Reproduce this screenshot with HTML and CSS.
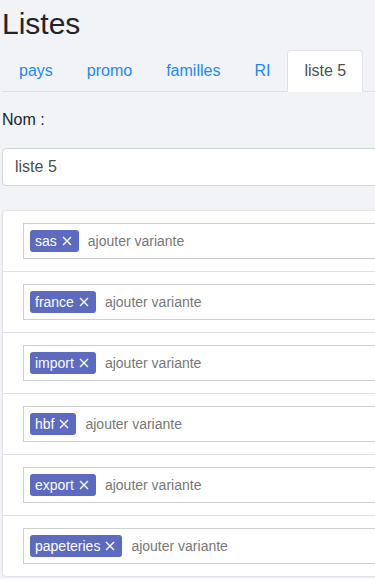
FILE: index.html
```html
<!DOCTYPE html>
<html lang="fr">
<head>
  <meta charset="UTF-8">
  <meta name="viewport" content="width=device-width, initial-scale=1.0">
  <title>Listes</title>
  <link rel="stylesheet" href="styles.css">
</head>
<body>
  <div class="page">
    <h2 class="title">Listes</h2>

    <ul class="tabs">
      <li><a href="#" class="tab">pays</a></li>
      <li><a href="#" class="tab">promo</a></li>
      <li><a href="#" class="tab">familles</a></li>
      <li><a href="#" class="tab">RI</a></li>
      <li><a href="#" class="tab active">liste 5</a></li>
    </ul>

    <label class="label" for="nom">Nom :</label>
    <input id="nom" class="field" value="liste 5">

    <ul class="items">
      <li class="item">
        <div class="tags">
          <span class="tag">sas <svg viewBox="0 0 10 10"><path d="M1 1L9 9M9 1L1 9"/></svg></span>
          <input class="tag_input" placeholder="ajouter variante">
        </div>
      </li>
      <li class="item">
        <div class="tags">
          <span class="tag">france <svg viewBox="0 0 10 10"><path d="M1 1L9 9M9 1L1 9"/></svg></span>
          <input class="tag_input" placeholder="ajouter variante">
        </div>
      </li>
      <li class="item">
        <div class="tags">
          <span class="tag">import <svg viewBox="0 0 10 10"><path d="M1 1L9 9M9 1L1 9"/></svg></span>
          <input class="tag_input" placeholder="ajouter variante">
        </div>
      </li>
      <li class="item">
        <div class="tags">
          <span class="tag">hbf <svg viewBox="0 0 10 10"><path d="M1 1L9 9M9 1L1 9"/></svg></span>
          <input class="tag_input" placeholder="ajouter variante">
        </div>
      </li>
      <li class="item">
        <div class="tags">
          <span class="tag">export <svg viewBox="0 0 10 10"><path d="M1 1L9 9M9 1L1 9"/></svg></span>
          <input class="tag_input" placeholder="ajouter variante">
        </div>
      </li>
      <li class="item">
        <div class="tags">
          <span class="tag">papeteries <svg viewBox="0 0 10 10"><path d="M1 1L9 9M9 1L1 9"/></svg></span>
          <input class="tag_input" placeholder="ajouter variante">
        </div>
      </li>
    </ul>
  </div>
</body>
</html>
```

FILE: styles.css
```css
html, body{
  overflow: hidden;
}

body{
  margin: 0;
  background-color: #f1f3f7;
  color: #212529;
  font-family: "Liberation Sans", Arial, sans-serif;
  font-size: 16px;
}

.page{
  width: 420px;
  padding: 0 2px;
}

.title{
  margin: 0;
  padding-top: 6px;
  font-size: 30px;
  font-weight: 400;
  line-height: 36px;
}

.tabs{
  display: flex;
  list-style: none;
  margin: 8px 0 0;
  padding: 0;
  border-bottom: 1px solid #dee2e6;
}

.tab{
  display: block;
  margin-bottom: -1px;
  padding: 8px 16px;
  line-height: 24px;
  color: #1e88f5;
  text-decoration: none;
  border: 1px solid transparent;
  border-radius: 4px 4px 0 0;
}

.tab.active{
  color: #495057;
  background-color: #fff;
  border-color: #dee2e6 #dee2e6 #fff;
}

.label{
  display: block;
  margin-top: 16px;
  line-height: 24px;
}

.field{
  display: block;
  box-sizing: border-box;
  width: 100%;
  height: 38px;
  margin-top: 16px;
  padding: 6px 12px;
  font-family: inherit;
  font-size: 16px;
  color: #495057;
  background-color: #fff;
  border: 1px solid #ced4da;
  border-radius: 4px;
}

.items{
  list-style: none;
  margin: 24px 0 0;
  padding: 0;
  background-color: #fff;
  border: 1px solid #dfe1e5;
  border-radius: 4px;
}

.item{
  padding: 12px 20px;
  border-top: 1px solid #dfe1e5;
}

.item:first-child{
  border-top: none;
}

.tags{
  display: flex;
  align-items: center;
  gap: 9px;
  padding: 6px;
  background-color: #fff;
  border: 1px solid #cfcfcf;
}

.tag{
  display: inline-flex;
  align-items: center;
  gap: 5px;
  height: 22px;
  padding: 0 7px 0 5px;
  font-size: 14px;
  color: #fff;
  background-color: #5c6bc0;
  border-radius: 3px;
}

.tag svg{
  width: 10px;
  height: 10px;
  stroke: #fff;
  stroke-width: 1.4;
  fill: none;
}

.tag_input{
  flex: 1;
  padding: 0;
  border: none;
  outline: none;
  font-family: inherit;
  font-size: 14px;
}

.tag_input::placeholder{
  color: #777;
}
```
